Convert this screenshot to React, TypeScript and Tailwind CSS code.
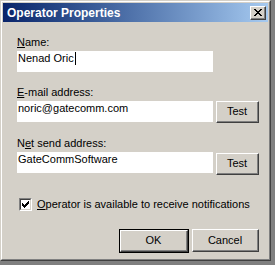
import React from "react";

function Btn({ children, w, h, def }: { children: React.ReactNode; w: string; h: string; def?: boolean }) {
  const inner = (
    <div className="w-full h-full border-t border-l border-t-white border-l-white border-r border-b border-r-[#404040] border-b-[#404040]">
      <div className="w-full h-full border-r border-b border-r-[#808080] border-b-[#808080] flex items-center justify-center text-[11px] leading-[13px] text-black">
        {children}
      </div>
    </div>
  );
  if (def) {
    return <div className={`${w} ${h} border border-black`}>{inner}</div>;
  }
  return <div className={`${w} ${h}`}>{inner}</div>;
}

function CloseX() {
  const px: [number, number][] = [];
  const rows = ["XX....XX", ".XX..XX.", "..XXXX..", "...XX...", "..XXXX..", ".XX..XX.", "XX....XX"];
  rows.forEach((r, y) => r.split("").forEach((c, x) => c === "X" && px.push([x, y])));
  return (
    <svg width="8" height="7" viewBox="0 0 8 7" shapeRendering="crispEdges">
      {px.map(([x, y]) => (
        <rect key={`${x}-${y}`} x={x} y={y} width="1" height="1" fill="#000" />
      ))}
    </svg>
  );
}

function Field({ children }: { children: React.ReactNode }) {
  return (
    <div className="w-[196px] h-[21px] bg-white text-[11px] leading-[13px] text-black pt-[1px] pl-[1px] flex items-start">
      {children}
    </div>
  );
}

export default function App() {
  return (
    <div className="w-[275px] h-[265px] bg-[#808080] font-['Liberation_Sans',Arial,sans-serif]">
      <div className="w-[271px] h-[261px] border-t border-l border-t-[#d4d0c8] border-l-[#d4d0c8] border-r border-b border-r-[#404040] border-b-[#404040]">
        <div className="w-full h-full border-t border-l border-t-white border-l-white border-r border-b border-r-[#808080] border-b-[#808080] bg-[#d4d0c8] p-[1px] flex flex-col">
          <div className="h-[19px] shrink-0 bg-gradient-to-r from-[#0a246a] to-[#a6caf0] flex items-center justify-between pl-[4px] pr-[2px]">
            <span className="text-white font-bold text-[12px] leading-[14px]">Operator Properties</span>
            <div className="w-[16px] h-[14px] bg-[#d4d0c8] border-t border-l border-t-white border-l-white border-r border-b border-r-[#404040] border-b-[#404040]">
              <div className="w-full h-full border-r border-b border-r-[#808080] border-b-[#808080] flex items-center justify-center pl-[1px]">
                <CloseX />
              </div>
            </div>
          </div>
          <div className="flex-1 flex flex-col pl-[14px] pt-[14px] text-[11px] leading-[13px] text-black">
            <div className="h-[13px]"><u>N</u>ame:</div>
            <div className="mt-[2px]">
              <Field>
                <span>Nenad Oric</span>
                <span className="inline-block w-px h-[13px] bg-black ml-[1px]" />
              </Field>
            </div>
            <div className="h-[13px] mt-[14px]"><u>E</u>-mail address:</div>
            <div className="mt-[2px] flex items-start gap-[3px]">
              <Field>noric@gatecomm.com</Field>
              <Btn w="w-[43px]" h="h-[22px]">Test</Btn>
            </div>
            <div className="h-[13px] mt-[14px]">N<u>e</u>t send address:</div>
            <div className="mt-[2px] flex items-start gap-[3px]">
              <Field>GateCommSoftware</Field>
              <div className="mt-[1px]">
                <Btn w="w-[43px]" h="h-[22px]">Test</Btn>
              </div>
            </div>
            <div className="mt-[23px] flex items-center gap-[5px] pl-[2px]">
              <div className="w-[13px] h-[13px] border-t border-l border-t-[#808080] border-l-[#808080] border-r border-b border-r-white border-b-white">
                <div className="w-full h-full border-t border-l border-t-[#404040] border-l-[#404040] border-r border-b border-r-[#d4d0c8] border-b-[#d4d0c8] bg-white flex items-center justify-center">
                  <svg width="7" height="7" viewBox="0 0 7 7" shapeRendering="crispEdges">
                    <path d="M0 2h1v3h-1z M1 3h1v3h-1z M2 4h1v3h-1z M3 3h1v3h-1z M4 2h1v3h-1z M5 1h1v3h-1z M6 0h1v3h-1z" fill="#000" />
                  </svg>
                </div>
              </div>
              <span><u>O</u>perator is available to receive notifications</span>
            </div>
            <div className="mt-[18px] flex justify-end gap-[3px] pr-[9px]">
              <Btn w="w-[70px]" h="h-[24px]" def>OK</Btn>
              <div>
                <Btn w="w-[67px]" h="h-[23px]">Cancel</Btn>
              </div>
            </div>
          </div>
        </div>
      </div>
    </div>
  );
}
